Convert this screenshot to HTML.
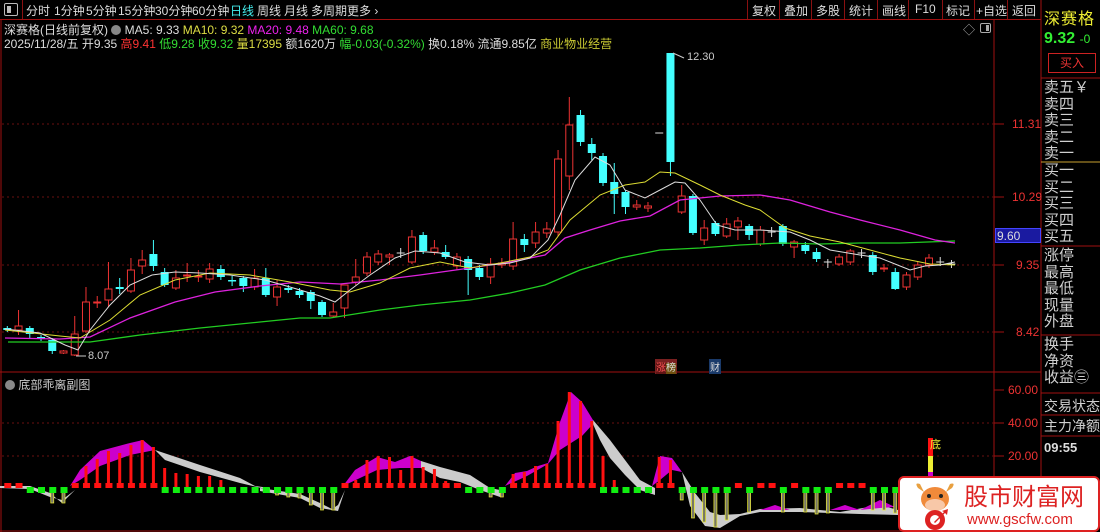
<!DOCTYPE html>
<html><head><meta charset="utf-8">
<style>
*{margin:0;padding:0;box-sizing:border-box}
body{width:1100px;height:532px;background:#000;overflow:hidden;position:relative;font-family:"Liberation Sans","Noto Sans CJK SC",sans-serif;color:#ccc}
.a{position:absolute;white-space:nowrap}
#top{position:absolute;left:0;top:0;width:1041px;height:20px;border-bottom:1px solid #a01010}
.tb{position:absolute;top:2px;font-size:12px;color:#ddd}
.sep{position:absolute;top:0;width:1px;height:19px;background:#8a1010}
.rp{position:absolute;left:1044px;font-size:15px;color:#d0d0d0;line-height:16.6px;white-space:nowrap}
</style></head><body>
<div id="top">
<div class="a" style="left:4px;top:3px;width:14px;height:13px;border:1px solid #bbb;border-radius:2px"><div style="position:absolute;left:2px;top:2px;width:4px;height:7px;background:#bbb"></div></div>
<div class="sep" style="left:22px"></div>
<span class="tb" style="left:26px">分时</span>
<span class="tb" style="left:54px">1分钟</span>
<span class="tb" style="left:86px">5分钟</span>
<span class="tb" style="left:118px">15分钟</span>
<span class="tb" style="left:155px">30分钟</span>
<span class="tb" style="left:192px">60分钟</span>
<span class="tb" style="left:230px;color:#4ee">日线</span>
<span class="tb" style="left:257px">周线</span>
<span class="tb" style="left:284px">月线</span>
<span class="tb" style="left:311px">多周期</span>
<span class="tb" style="left:347px">更多 ›</span>
<div class="sep" style="left:747px"></div><span class="tb" style="left:752px">复权</span>
<div class="sep" style="left:779px"></div><span class="tb" style="left:784px">叠加</span>
<div class="sep" style="left:811px"></div><span class="tb" style="left:816px">多股</span>
<div class="sep" style="left:844px"></div><span class="tb" style="left:849px">统计</span>
<div class="sep" style="left:877px"></div><span class="tb" style="left:882px">画线</span>
<div class="sep" style="left:908px"></div><span class="tb" style="left:915px">F10</span>
<div class="sep" style="left:942px"></div><span class="tb" style="left:946px">标记</span>
<div class="sep" style="left:974px"></div><span class="tb" style="left:976px">+自选</span>
<div class="sep" style="left:1007px"></div><span class="tb" style="left:1012px">返回</span>
</div>
<div class="a" style="left:4px;top:21px;font-size:12px;color:#ddd">深赛格(日线前复权) <span style="display:inline-block;width:10px;height:10px;border-radius:5px;background:#888;vertical-align:-1px"></span> MA5: 9.33 <span style="color:#dd4">MA10: 9.32</span> <span style="color:#e2e">MA20: 9.48</span> <span style="color:#3d3">MA60: 9.68</span></div>
<div class="a" style="left:4px;top:35px;font-size:12px;color:#ddd">2025/11/28/五 开9.35 <span style="color:#f33">高9.41</span> <span style="color:#3d3">低9.28</span> <span style="color:#3d3">收9.32</span> <span style="color:#dd4">量17395</span> 额1620万 <span style="color:#3d3">幅-0.03(-0.32%)</span> 换0.18% 流通9.85亿 <span style="color:#cc3">商业物业经营</span></div>
<div class="a" style="left:963px;top:21px;font-size:12px;color:#aaa">◇</div>
<div class="a" style="left:980px;top:23px;width:11px;height:10px;border:1px solid #aaa;border-radius:2px"><div style="position:absolute;right:1px;top:1px;width:3px;height:6px;background:#aaa"></div></div>

<svg id="s" class="a" style="left:0;top:0" width="1100" height="532"></svg>

<div class="a" style="left:1012px;top:117px;font-size:12px;color:#e33">11.31</div>
<div class="a" style="left:1012px;top:190px;font-size:12px;color:#e33">10.29</div>
<div class="a" style="left:1016px;top:258px;font-size:12px;color:#e33">9.35</div>
<div class="a" style="left:1016px;top:325px;font-size:12px;color:#e33">8.42</div>
<div class="a" style="left:995px;top:228px;width:46px;height:15px;background:#1a1aa0;border:1px solid #44f;font-size:12px;color:#ddd;padding-left:1px">9.60</div>
<div class="a" style="left:1008px;top:383px;font-size:12px;color:#e33">60.00</div>
<div class="a" style="left:1008px;top:416px;font-size:12px;color:#e33">40.00</div>
<div class="a" style="left:1008px;top:449px;font-size:12px;color:#e33">20.00</div>
<div class="a" style="left:687px;top:51px;font-size:11px;color:#ccc">12.30</div>
<div class="a" style="left:88px;top:350px;font-size:11px;color:#ccc">8.07</div>
<div class="a" style="left:655px;top:359px;font-size:10px;color:#ddd;background:#7a2020;padding:0 1px"><span style="color:#f55;background:#601515">涨</span><span style="background:#705010">榜</span></div>
<div class="a" style="left:709px;top:359px;font-size:10px;color:#ddd;background:#1a3a6a;padding:0 1px">财</div>
<div class="a" style="left:5px;top:376px;font-size:12px;color:#ccc"><span style="display:inline-block;width:10px;height:10px;border-radius:5px;background:#888;vertical-align:-1px"></span> 底部乖离副图</div>
<div class="a" style="left:930px;top:436px;font-size:11px;color:#ee3">底</div>

<div class="a" style="left:1044px;top:5px;font-size:16px;color:#ee3;letter-spacing:1px">深赛格</div>
<div class="a" style="left:1044px;top:30px;font-size:16px;font-weight:bold;color:#3e3">9.32 <span style="font-size:12px;font-weight:normal">-0</span></div>
<div class="a" style="left:1048px;top:53px;width:48px;height:20px;border:1px solid #c22;font-size:12px;color:#e33;text-align:center;line-height:18px">买入</div>
<div class="rp" style="top:80px">卖五￥<br>卖四<br>卖三<br>卖二<br>卖一</div>
<div class="rp" style="top:163px">买一<br>买二<br>买三<br>买四<br>买五</div>
<div class="rp" style="top:248px">涨停<br>最高<br>最低<br>现量<br>外盘</div>
<div class="rp" style="top:337px">换手<br>净资<br>收益㊂</div>
<div class="rp" style="top:396px;line-height:20px;font-size:14px">交易状态<br>主力净额</div>
<div class="a" style="left:1044px;top:440px;font-size:13px;font-weight:bold;color:#ddd">09:55</div>

<div class="a" style="left:898px;top:476px;width:202px;height:56px;background:#fff;border:2px solid #d22;border-radius:6px;overflow:hidden">
 <svg class="a" style="left:12px;top:2px" width="46" height="50" viewBox="0 0 46 50">
  <path d="M6 8 Q2 2 8 4 L12 12Z M40 8 Q44 2 38 4 L34 12Z" fill="#e8a040"/>
  <ellipse cx="23" cy="19" rx="14" ry="12" fill="#f08a3a"/>
  <ellipse cx="23" cy="25" rx="10" ry="6" fill="#f8c8a8"/>
  <circle cx="17" cy="16" r="2" fill="#222"/><circle cx="29" cy="16" r="2" fill="#222"/>
  <circle cx="23" cy="40" r="10" fill="#d22"/><circle cx="23" cy="40" r="5" fill="#fff"/>
  <path d="M22 42 L32 32 L30 31 L36 29 L35 35 L33 33 L23 43Z" fill="#d22"/>
 </svg>
 <div class="a" style="left:64px;top:3px;font-size:24px;line-height:28px;color:#d22;font-family:'Noto Sans CJK SC',sans-serif">股市财富网</div>
 <div class="a" style="left:67px;top:33px;font-size:15px;color:#d22">www.gscfw.com</div>
</div>

<script>
const s=document.getElementById('s');let h='';
const L=(x1,y1,x2,y2,c,w,d)=>h+=`<line x1="${x1}" y1="${y1}" x2="${x2}" y2="${y2}" stroke="${c}" stroke-width="${w||1}" ${d?'stroke-dasharray="'+d+'"':''}/>`;
L(994,20,994,532,'#a01010');L(1041,0,1041,532,'#a01010');L(0,372,994,372,'#a01010');L(994,372,1041,372,'#a01010');
L(1,20,1,532,'#a01010');L(0,531,994,531,'#a01010');
[124,197,265,332].forEach(y=>{L(2,y,994,y,'#6a1010',1,'2 3');L(994,y,1004,y,'#a01010')});
[423,456].forEach(y=>{L(2,y,994,y,'#6a1010',1,'2 3')});[390,423,456].forEach(y=>L(994,y,1004,y,'#a01010'));
L(1041,78,1100,78,'#a01010');L(1041,162,1100,162,'#c8a030');L(1041,246,1100,246,'#a01010');L(1041,335,1100,335,'#a01010');L(1041,393,1100,393,'#a01010');L(1041,415,1100,415,'#a01010');L(1041,436,1100,436,'#a01010');
const C=[[328,330,326,332,0],[330,326,310,335,1],[328,334,326,338,0],[337,339,335,341,0],[340,351,338,354,0],[353,351,350,354,1],[355,334,316,356,1],[331,302,287,333,1],[303,302,296,308,1],[300,289,262,307,1],[287,289,278,294,0],[291,270,258,293,1],[266,260,250,274,1],[254,266,240,271,0],[272,285,268,287,0],[288,278,270,290,1],[276,275,263,282,1],[277,276,270,282,1],[279,269,263,283,1],[269,277,265,280,0],[280,281,276,286,0],[278,286,276,292,0],[287,278,269,290,1],[278,295,268,297,0],[297,287,280,306,1],[288,290,285,293,0],[291,295,288,298,0],[292,301,290,309,0],[302,315,300,317,0],[316,312,303,318,1],[308,285,285,318,1],[282,277,259,285,1],[273,257,252,276,1],[262,254,250,265,1],[257,255,253,265,1],[253,254,248,258,2],[262,237,230,264,1],[235,251,232,254,0],[252,248,240,255,1],[252,257,245,259,0],[266,257,253,270,1],[259,270,256,295,0],[268,277,265,280,0],[277,264,258,284,1],[265,263,258,268,1],[266,239,222,270,1],[239,245,234,252,0],[243,232,222,248,1],[233,229,222,238,1],[232,159,150,236,1],[176,125,97,190,1],[115,142,110,146,0],[144,153,138,160,0],[156,183,153,186,0],[182,194,163,214,0],[192,207,190,214,0],[207,205,200,210,1],[208,206,202,212,1],[133,133,133,133,3],[53,162,53,176,0],[212,196,185,214,1],[196,233,194,235,0],[240,228,220,245,1],[223,234,221,236,0],[236,224,218,238,1],[227,221,217,240,1],[226,235,224,240,0],[244,230,226,246,1],[232,232,227,237,2],[226,244,224,246,0],[247,242,240,258,1],[245,251,242,254,0],[252,259,248,262,0],[262,262,259,268,2],[264,257,254,266,1],[262,251,249,265,1],[253,253,249,258,2],[255,272,252,275,0],[269,268,264,272,1],[272,289,268,290,0],[287,275,272,290,1],[277,265,262,280,1],[265,258,254,268,1],[262,262,257,266,2],[264,264,260,268,2]];
C.forEach((c,i)=>{const x=7.3+11.24*i;let [o,cl,hi,lo,t]=c;const top=Math.min(o,cl),bot=Math.max(o,cl);
 if(t==3){L(x-4,o,x+4,o,'#ddd');return}
 const col=t==1?'#e33':(t==2?'#ddd':'#4ff');
 L(x,hi,x,lo,col);
 if(t==2){L(x-4,o,x+4,o,col);return}
 if(t==1)h+=`<rect x="${x-3.5}" y="${top}" width="7" height="${Math.max(bot-top,1)}" fill="#000" stroke="${col}"/>`;
 else h+=`<rect x="${x-4}" y="${top}" width="8" height="${Math.max(bot-top,1.5)}" fill="${col}"/>`;});
const P=(pts,c,w)=>h+=`<polyline points="${pts}" fill="none" stroke="${c}" stroke-width="${w||1}"/>`;
P('8,342 90,342 140,335 200,328 260,322 300,318 330,318 380,310 420,305 470,300 510,293 545,285 580,270 620,258 660,250 700,248 740,245 780,243 820,244 860,243 900,243 955,241','#2c2',1.3);
P('5,338 60,339 90,337 130,318 175,302 215,292 260,286 300,282 340,284 380,280 420,275 470,268 510,262 545,255 565,238 590,230 620,221 650,216 680,200 720,196 760,195 790,200 830,212 860,220 900,230 935,240 955,243','#d2d',1.3);
P('5,330 60,336 80,338 110,320 140,295 175,280 210,273 250,275 290,282 330,290 350,292 380,283 410,268 440,262 470,268 500,263 530,257 548,250 570,220 600,195 625,185 645,182 660,172 675,173 700,185 720,195 745,205 760,210 785,228 810,236 840,242 870,250 900,258 930,264 955,265','#dd3');
P('5,329 40,333 65,345 78,350 90,330 110,305 130,285 152,275 175,272 200,273 230,275 265,280 290,287 320,296 335,302 350,290 370,275 395,258 415,251 440,253 465,262 490,265 510,263 530,258 548,240 560,215 575,180 595,157 610,165 625,190 645,198 660,190 675,182 685,183 700,200 717,225 735,230 760,230 790,232 810,240 830,250 860,255 880,258 895,264 910,270 925,266 940,265 955,262','#ddd');
L(673,53,684,58,'#ccc');L(76,356,86,356,'#ccc');
const G=(pts,c)=>h+=`<polygon points="${pts}" fill="${c}"/>`;
G('155,450 200,465 240,478 255,486 270,488 270,490 240,483 200,472 165,460','#ccc');
G('0,486 30,486 50,493 62,503 70,495 75,490 62,500 50,497 30,489 0,488','#ccc');
G('260,488 300,494 320,503 332,509 338,505 345,490 338,511 320,508 300,498 260,491','#ccc');
G('421,461 440,467 470,475 490,488 500,490 500,497 480,490 460,482 440,478 421,468','#ccc');
G('593,420 610,440 625,460 640,480 655,488 655,495 640,490 625,475 610,458 600,440 593,424','#ccc');
G('682,472 695,493 710,512 720,515 740,514 760,509 800,508 840,512 880,505 898,510 898,515 860,514 800,512 760,512 740,516 720,528 705,526 690,506','#ccc');
G('70,486 80,470 100,451 130,443 143,440 155,450 130,455 100,466 80,480','#c0c');
G('343,486 355,470 377,457 395,462 410,456 421,461 421,468 400,468 377,470 360,478','#c0c');
G('505,486 515,473 527,471 538,466 548,463 560,422 571,392 582,402 593,420 593,424 582,436 571,443 560,450 548,464 527,476','#c0c');
G('652,486 660,456 672,458 682,472 672,470 660,480','#c0c');
G('760,510 775,505 790,510','#c0c');G('830,510 845,505 860,510','#c0c');G('860,510 880,500 895,507 880,508','#c0c');
const RB={7:466,8:459,9:451,10:453,11:445,12:440,13:447,14:468,15:473,16:474,17:476,18:476,19:480,31:480,32:460,33:456,34:457,35:470,36:456,37:467,38:469,39:481,40:484,45:474,46:472,47:466,48:464,49:421,50:392,51:401,52:421,53:456,54:480,58:457,59:460};
const red=new Set([0,1,6,7,8,9,10,11,12,13,30,31,32,33,34,35,36,37,38,39,40,45,46,47,48,49,50,51,52,58,59,65,67,68,70,74,75,76]);
const yb={4:503,5:503,24:495,25:497,26:498,27:505,28:510,29:510,41:488,42:492,43:497,44:497,60:500,61:518,62:522,63:527,64:520,66:512,69:512,71:512,72:514,73:513,77:510,78:510,79:513};
for(let i=0;i<80;i++){const x=7.3+11.24*i;
 if(yb[i])h+=`<rect x="${x-1.5}" y="490" width="3" height="${yb[i]-490}" fill="#776" stroke="#ee3" stroke-width=".7"/>`;
 if(RB[i])L(x,RB[i],x,487,'#f11',3);
 if(red.has(i))h+=`<rect x="${x-3}" y="483" width="7" height="5" fill="#f11"/>`;
 else h+=`<rect x="${x-3}" y="487" width="7" height="6" fill="#1e1"/>`;}
h+=`<rect x="928" y="438" width="5" height="18" fill="#f11"/><rect x="928" y="456" width="5" height="16" fill="#ee3"/><rect x="928" y="472" width="5" height="4" fill="#c0c"/>`;
s.innerHTML=h;
</script>
</body></html>
